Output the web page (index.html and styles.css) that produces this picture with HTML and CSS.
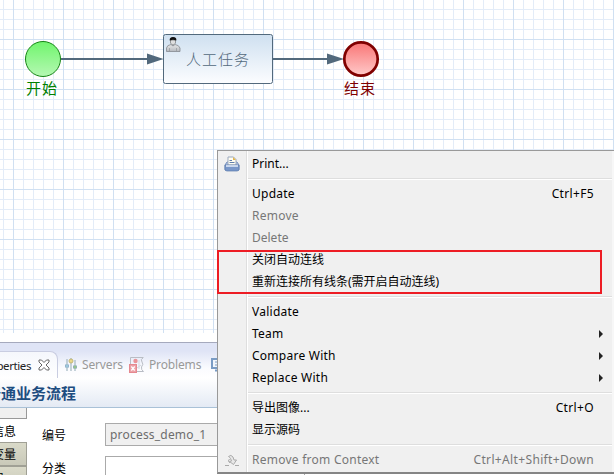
FILE: index.html
```
<!DOCTYPE html>
<html lang="zh-CN">
<head>
<meta charset="utf-8">
<title>Process designer</title>
<link rel="stylesheet" href="styles.css">
</head>
<body>
<main class="app">
  <section class="canvas">
    <svg class="diagram" width="614" height="333" viewBox="0 0 614 333">
      <defs>
        <linearGradient id="green" x2="0" y2="1"><stop stop-color="#70f56d"/><stop offset="1" stop-color="#b5f8b3"/></linearGradient>
        <linearGradient id="red" x2="0" y2="1"><stop stop-color="#f97575"/><stop offset="1" stop-color="#ffcaca"/></linearGradient>
        <linearGradient id="task" x2="0" y2="1"><stop stop-color="#cfe0f0"/><stop offset="1" stop-color="#fcfdff"/></linearGradient>
        <linearGradient id="person" x2="0" y2="1"><stop stop-color="#e8e8e8"/><stop offset="1" stop-color="#b5b9bf"/></linearGradient>
      </defs>
      <path d="M61 59H150M273 59H330" stroke="#52697c" stroke-width="2"/>
      <path d="M147 53.500L163.500 59L147 64.500ZM327 53.500L344 59L327 64.500Z" fill="#52697c"/>
      <circle cx="43" cy="59" r="17.500" fill="url(#green)" stroke="#168516"/>
      <circle cx="361" cy="59" r="16.700" fill="url(#red)" stroke="#800000" stroke-width="2.700"/>
      <rect x="163.500" y="34.500" width="109" height="49" rx="2" fill="url(#task)" stroke="#52697c"/>
      <path d="M166.500 51.500V48Q167 45 171 44.500L173 46L175 44.500Q179 45 180 48V51.500Z" fill="url(#person)" stroke="#85898f" stroke-width=".8"/>
      <path d="M170.500 40V43Q173 47 175.500 43V40Z" fill="#dedede" stroke="#777" stroke-width=".7"/>
      <path d="M169.700 40.500Q169.300 37 173 37Q177 37 176.300 40.500L173 39.700Z" fill="#111"/>
      <path d="M169.500 48V51M176.500 48V51" stroke="#8a8e92" stroke-width=".6"/>
      <text class="node task-name" x="186" y="64.500" textLength="63">人工任务</text>
      <text class="node start-name" x="26" y="93.500" textLength="31">开始</text>
      <text class="node end-name" x="344" y="93.500" textLength="31">结束</text>
    </svg>
  </section>
  <section class="views">
    <div class="tabs">
      <div class="tab active"><span>perties</span>
        <svg width="12" height="12" viewBox="0 0 12 12"><path d="M1 1H3.500L6 3.500L8.500 1H11V3L8 6L11 9V11H8.500L6 8.500L3.500 11H1V9L4 6L1 3Z" fill="#fff" stroke="#666"/></svg>
      </div>
      <div class="tab servers">
        <svg width="14" height="14" viewBox="0 0 14 14"><path d="M3 1V13M7 0V13M11 2V13" stroke="#a9bcc6" stroke-width="1.300"/><path d="M1 8H5M9 9H13" stroke="#91acc4" stroke-width="3"/><circle cx="7" cy="3" r="2" fill="#ead889" stroke="#c3b777"/><circle cx="3" cy="8" r="1.500" fill="#9bc7db"/><circle cx="11" cy="9" r="1.500" fill="#95c38c"/></svg>
        <span>Servers</span>
      </div>
      <div class="tab problems">
        <svg width="16" height="16" viewBox="0 0 16 16"><path d="M1.500 8V.5H14.500M14 1Q11 2 13 5Q15 7 12.500 10Q12 13 14.500 14.500H8" fill="none" stroke="#b9bdc5"/><path d="M10 3V12M12 8L8 11" stroke="#d4d8df"/><circle cx="6.500" cy="4" r="2.200" fill="#e99499"/><rect x=".5" y="7.500" width="7" height="8" fill="#eca1a7" stroke="#e5888f"/><path d="M2.300 9.500L5.700 13.500M5.700 9.500L2.300 13.500" stroke="#fff" stroke-width="1.300"/></svg>
        <span>Problems</span>
      </div>
      <div class="tab console">
        <svg width="14" height="14" viewBox="0 0 14 14"><path d="M1 1H13V10H1Z" fill="#f2f6fb" stroke="#7a9cc4" stroke-width="2"/><path d="M4 4H10M4 7H10" stroke="#7a9cc4"/><path d="M4 12.500H11" stroke="#7a9cc4" stroke-width="2"/></svg>
      </div>
    </div>
    <h1 class="title"><span>普通业务流程</span></h1>
    <div class="details">
      <nav class="sections">
        <div class="section blank"></div>
        <div class="section selected"><span>信息</span></div>
        <div class="section"><span>变量</span></div>
        <div class="section last"><span>器</span></div>
      </nav>
      <div class="form">
        <label class="field"><span>编号</span><b class="input disabled">process_demo_1</b></label>
        <label class="field"><span>分类</span><b class="input"></b></label>
      </div>
    </div>
  </section>
  <div class="menu">
    <div class="item"><svg class="icon" width="16" height="16" viewBox="0 0 16 16"><path d="M3 6L1 9V14H15V9L13 6Z" fill="#aebfdf" stroke="#7891bd"/><path d="M4 9V1H9.500L12 3.500V9Z" fill="#fffdf0" stroke="#9ba9bf"/><path d="M9 1V4H12Z" fill="#e3b54d"/><path d="M5.500 4.500H8M5.500 6.500H10.500" stroke="#617fad"/><path d="M1 9H15V13Q15 15 13 15H3Q1 15 1 13Z" fill="#7997c9" stroke="#5c7cae" stroke-width=".7"/><path d="M2 10H14" stroke="#e5edf9" stroke-width="1.500"/></svg><span>Print...</span></div>
    <hr>
    <div class="item wide"><span>Update</span><kbd>Ctrl+F5</kbd></div>
    <div class="item off wide"><span>Remove</span></div>
    <div class="item off"><span>Delete</span></div>
    <div class="item"><span>关闭自动连线</span></div>
    <div class="item"><span>重新连接所有线条(需开启自动连线)</span></div>
    <hr>
    <div class="item wide"><span>Validate</span></div>
    <div class="item wide"><span>Team</span><i class="arrow"></i></div>
    <div class="item wide"><span>Compare With</span><i class="arrow"></i></div>
    <div class="item wide"><span>Replace With</span><i class="arrow"></i></div>
    <hr>
    <div class="item"><span>导出图像...</span><kbd>Ctrl+O</kbd></div>
    <div class="item"><span>显示源码</span></div>
    <hr>
    <div class="item off wide"><svg class="icon" width="16" height="16" viewBox="0 0 16 16"><path d="M1 13.500H5M11 13.500H15" stroke="#aaa"/><path d="M4.500 4.500Q7 2 9 5L10 8H12.500L9.500 12.500L5.500 9.500L7.500 9L6.500 6.500Q5.500 5 4.500 4.500Z" fill="#e7e7e7" stroke="#aaa"/><path d="M5.500 7Q3 9 6 11" fill="none" stroke="#aaa"/></svg><span>Remove from Context</span><kbd>Ctrl+Alt+Shift+Down</kbd></div>
    <div class="highlight"></div>
  </div>
</main>
</body>
</html>
```
FILE: styles.css
```
* { box-sizing: border-box; }
body { margin: 0; overflow: hidden; background: #fff; font-family: "Noto Sans", "Noto Sans CJK SC", sans-serif; font-size: 12px; color: #000; }
.app { position: relative; width: 614px; height: 475px; overflow: hidden; }
.canvas {
  height: 333px;
  background-image:
    linear-gradient(90deg, #d0e0f2 1px, transparent 1px),
    linear-gradient(#d0e0f2 1px, transparent 1px),
    linear-gradient(90deg, #e3ecf8 1px, transparent 1px),
    linear-gradient(#e3ecf8 1px, transparent 1px);
  background-size: 50px 50px, 50px 50px, 10px 10px, 10px 10px;
  background-position: 13px 0, 0 39px, 3px 0, 0 9px;
}
.diagram { display: block; }
.node { font-family: "Noto Sans CJK SC", sans-serif; font-size: 15px; font-weight: 400; }
.task-name { fill: #52697c; font-weight: 300; }
.start-name { fill: #008000; }
.end-name { fill: #800000; }
.views { height: 142px; padding-top: 9px; }
.tabs { display: flex; height: 36px; border-top: 1px solid #a5a9bd; background: linear-gradient(#dfe4f6 0 8px, #fafbfe 25px, #fff); color: #999; }
.tab { display: flex; align-items: center; height: 27px; margin-top: 8px; white-space: nowrap; }
.tab svg { flex: none; }
.active { width: 58px; justify-content: flex-end; gap: 7px; padding-right: 7px; border: 1px solid #c9cde1; border-width: 1px 1px 0 0; border-radius: 0 8px 0 0; background: linear-gradient(#f5f7fc, #fff); color: #222; font-size: 11.5px; }
.active span { margin-left: 0; letter-spacing: -.4px; }
.servers { margin-left: 6px; gap: 4px; width: 65px; letter-spacing: -.15px; }
.problems { gap: 4px; width: 82px; letter-spacing: -.15px; }
.title { display: flex; align-items: center; justify-content: flex-end; width: 100%; height: 30px; margin: 0; padding-right: 538px; border-bottom: 1px solid #a9c1d7; background: linear-gradient(#fff, #e4eaf4); color: #1d4d80; font-size: 15px; line-height: 20px; white-space: nowrap; }
.details { display: flex; height: 67px; }
.sections { width: 27px; flex: none; overflow: hidden; }
.section { display: flex; align-items: center; justify-content: flex-end; height: 24px; padding-right: 10px; border: 1px solid #a0a095; border-width: 1px 1px 1px 0; background: linear-gradient(#dadac9, #c9c9b9); white-space: nowrap; }
.blank { height: 11px; border-color: #999; border-top: 0; background: #f0f0f0; }
.selected { height: 23px; padding-right: 11px; border: 0; background: #fff; }
.last { padding-right: 22px; }
.form { padding: 15px 0 0 15px; flex: 1; }
.field { display: flex; align-items: center; height: 23px; margin-bottom: 10px; }
.field span { width: 63px; }
.input { width: 200px; height: 23px; padding-left: 4px; border: 1px solid #aaa; background: #fff; color: #6d6d6d; font-size: 12px; font-weight: 400; line-height: 22px; letter-spacing: .2px; }
.disabled { background: #f0f0f0; }
.menu { position: absolute; left: 217px; top: 150px; width: 400px; height: 324px; padding: 2px 4px 0 34px; border: 1px solid #999; border-bottom: 2px solid #858585; background: linear-gradient(90deg, #f0f0f0 28px, #dedede 28px 29px, #fff 29px 30px, #f0f0f0 30px 394px, #f7f7f7 394px); }
.item { position: relative; display: flex; align-items: center; height: 22px; padding-right: 18px; line-height: 22px; white-space: nowrap; }
.wide { letter-spacing: .25px; }
.icon { position: absolute; left: -28px; top: 3px; }
.off { color: #777; }
kbd { margin-left: auto; font: 12px/22px "Noto Sans", sans-serif; letter-spacing: .35px; }
hr { height: 2px; margin: 3px 0 3px -4px; border: 0; border-top: 1px solid #dedede; background: #fff; }
.arrow { margin-left: auto; margin-right: -9px; border: 4px solid transparent; border-left-color: #222; border-right: 0; }
.highlight { position: absolute; left: -1px; top: 99px; width: 385px; height: 44px; border: 2px solid #ed1c24; }
```
